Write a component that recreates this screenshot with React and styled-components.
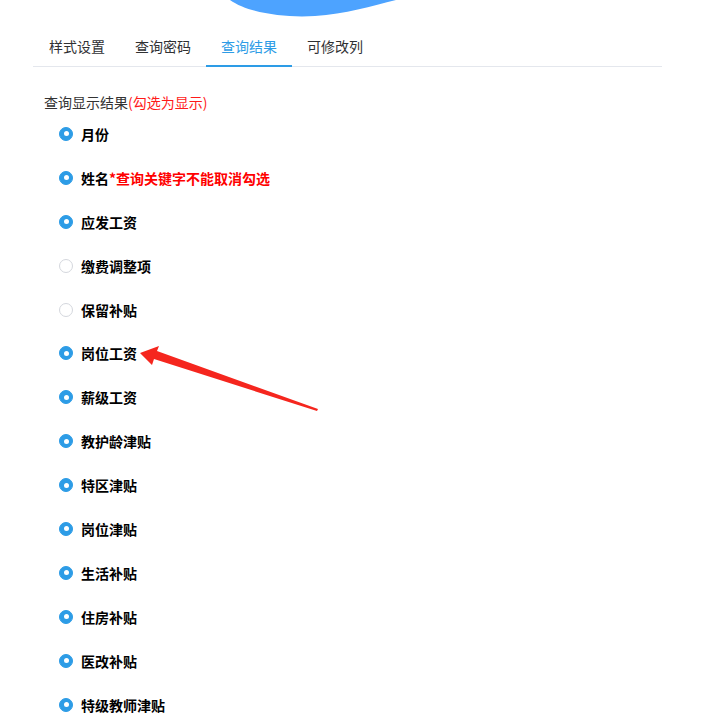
import React from 'react'
import styled, { createGlobalStyle } from 'styled-components'

const GlobalStyle = createGlobalStyle`
  html, body {
    margin: 0;
    padding: 0;
    background: #fff;
  }
  body {
    font-family: "Noto Sans CJK SC", "Microsoft YaHei", sans-serif;
    color: #303133;
  }
`

const Page = styled.div`
  position: relative;
  width: 723px;
  height: 727px;
  overflow: hidden;
`

const Banner = styled.svg`
  display: block;
  width: 723px;
  height: 20px;
`

const TabBar = styled.div`
  display: flex;
  margin: 6px 0 0 33px;
  width: 629px;
  height: 41px;
  border-bottom: 1px solid #e4e7ed;
  box-sizing: border-box;
`

const Tab = styled.div`
  position: relative;
  padding: 0 15px;
  height: 40px;
  line-height: 40px;
  font-size: 14px;
  color: ${p => (p.$active ? '#2d9ce6' : '#303133')};
  &:first-child {
    padding-left: 16px;
  }
  &::after {
    content: '';
    display: ${p => (p.$active ? 'block' : 'none')};
    position: absolute;
    left: 0;
    right: 0;
    bottom: -1px;
    height: 2px;
    background: #2d9ce6;
  }
`

const Section = styled.div`
  padding: 25px 0 0 44px;
`

const Heading = styled.div`
  font-size: 14px;
  line-height: 20px;
  color: #333;
  span {
    color: #ff1a1a;
  }
`

const List = styled.div`
  display: flex;
  flex-direction: column;
  padding-left: 15px;
`

const Item = styled.label`
  display: flex;
  align-items: center;
  gap: 8px;
  height: 43.9px;
  font-size: 14px;
  font-weight: bold;
  color: #000;
  em {
    font-style: normal;
    color: #ff0000;
  }
`

const Radio = styled.span`
  width: 14px;
  height: 14px;
  border-radius: 50%;
  box-sizing: border-box;
  display: flex;
  align-items: center;
  justify-content: center;
  background: ${p => (p.$checked ? '#2d9ce6' : '#fff')};
  border: 1px solid ${p => (p.$checked ? '#2d9ce6' : '#d4d7dd')};
  &::after {
    content: '';
    display: ${p => (p.$checked ? 'block' : 'none')};
    width: 5px;
    height: 5px;
    border-radius: 50%;
    background: #fff;
  }
`

const Arrow = styled.svg`
  position: absolute;
  left: 0;
  top: 0;
  width: 723px;
  height: 727px;
  pointer-events: none;
`

const tabs = ['样式设置', '查询密码', '查询结果', '可修改列']

const items = [
  { name: '月份', checked: true },
  { name: '姓名', checked: true, note: '*查询关键字不能取消勾选' },
  { name: '应发工资', checked: true },
  { name: '缴费调整项', checked: false },
  { name: '保留补贴', checked: false },
  { name: '岗位工资', checked: true },
  { name: '薪级工资', checked: true },
  { name: '教护龄津贴', checked: true },
  { name: '特区津贴', checked: true },
  { name: '岗位津贴', checked: true },
  { name: '生活补贴', checked: true },
  { name: '住房补贴', checked: true },
  { name: '医改补贴', checked: true },
  { name: '特级教师津贴', checked: true },
]

const App = () => {
  return (
    <Page>
      <GlobalStyle />
      <Banner viewBox="0 0 723 20">
        <path d="M230,0 C248,13 285,18 315,16 C345,14 372,6 396,0 Z" fill="#4da3ff" />
      </Banner>
      <TabBar>
        {tabs.map(t => (
          <Tab key={t} $active={t === '查询结果'}>{t}</Tab>
        ))}
      </TabBar>
      <Section>
        <Heading>查询显示结果<span>(勾选为显示)</span></Heading>
        <List>
          {items.map(it => (
            <Item key={it.name}>
              <Radio $checked={it.checked} />
              <span>
                {it.name}
                {it.note && <em>{it.note}</em>}
              </span>
            </Item>
          ))}
        </List>
      </Section>
      {/* annotation arrow */}
      <Arrow viewBox="0 0 723 727">
        <polygon
          points="140,353 159,346 157,351 318,409 317,411 154,359 152,365"
          fill="#f5261e"
        />
      </Arrow>
    </Page>
  )
}

export default App
